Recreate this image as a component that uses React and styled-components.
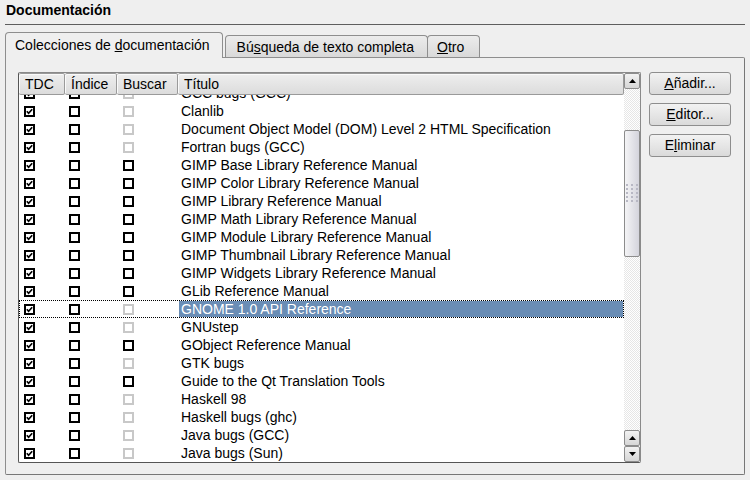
import React from 'react'
import styled, { createGlobalStyle, css } from 'styled-components'

const rows = [
  { title: 'GCC bugs (GCC)', search: 'off' },
  { title: 'Clanlib', search: 'off' },
  { title: 'Document Object Model (DOM) Level 2 HTML Specification', search: 'off' },
  { title: 'Fortran bugs (GCC)', search: 'off' },
  { title: 'GIMP Base Library Reference Manual', search: 'on' },
  { title: 'GIMP Color Library Reference Manual', search: 'on' },
  { title: 'GIMP Library Reference Manual', search: 'on' },
  { title: 'GIMP Math Library Reference Manual', search: 'on' },
  { title: 'GIMP Module Library Reference Manual', search: 'on' },
  { title: 'GIMP Thumbnail Library Reference Manual', search: 'on' },
  { title: 'GIMP Widgets Library Reference Manual', search: 'on' },
  { title: 'GLib Reference Manual', search: 'on' },
  { title: 'GNOME 1.0 API Reference', search: 'off', selected: true },
  { title: 'GNUstep', search: 'off' },
  { title: 'GObject Reference Manual', search: 'on' },
  { title: 'GTK bugs', search: 'off' },
  { title: 'Guide to the Qt Translation Tools', search: 'on' },
  { title: 'Haskell 98', search: 'off' },
  { title: 'Haskell bugs (ghc)', search: 'off' },
  { title: 'Java bugs (GCC)', search: 'off' },
  { title: 'Java bugs (Sun)', search: 'off' },
]

function Check({ checked, disabled }) {
  const color = disabled ? '#c8c8c8' : '#000'
  return (
    <svg width="11" height="11" viewBox="0 0 11 11">
      <rect x="1" y="1" width="9" height="9" fill="#fff" stroke={color} strokeWidth="2" />
      {checked && (
        <path d="M2.8 5.2 L4.6 7.2 L8.2 3.2" fill="none" stroke="#000" strokeWidth="1.7" />
      )}
    </svg>
  )
}

function Arrow({ down }) {
  return (
    <svg width="7" height="4" viewBox="0 0 7 4">
      <path d={down ? 'M0 0 H7 L3.5 4 Z' : 'M0 4 H7 L3.5 0 Z'} fill="#000" />
    </svg>
  )
}

function App() {
  return (
    <>
      <GlobalStyle />
      <Page>
        <Title>Documentación</Title>
        <Rule />
        <TabBar>
          <Tab active left={9} right={12}>
            Colecciones de <u>d</u>ocumentación
          </Tab>
          <Tab left={11} right={13}>
            Bú<u>s</u>queda de texto completa
          </Tab>
          <Tab joined left={9} right={15}>
            <u>O</u>tro
          </Tab>
        </TabBar>
        <Panel>
          <ListBox>
            <ListMain>
              <Header>
                <HeadCell>TDC</HeadCell>
                <HeadCell>Índice</HeadCell>
                <HeadCell>Buscar</HeadCell>
                <HeadCell>Título</HeadCell>
              </Header>
              <Body>
                <Scrolled>
                  {rows.map((r) => (
                    <Row key={r.title} selected={r.selected}>
                      <BoxCell pad={4}>
                        <Check checked />
                      </BoxCell>
                      <BoxCell pad={3}>
                        <Check />
                      </BoxCell>
                      <BoxCell pad={5}>
                        <Check disabled={r.search === 'off'} />
                      </BoxCell>
                      <TitleCell selected={r.selected}>{r.title}</TitleCell>
                    </Row>
                  ))}
                </Scrolled>
              </Body>
            </ListMain>
            <ScrollBar>
              <ScrollButton>
                <Arrow />
              </ScrollButton>
              <Thumb>
                <Grip>
                  {Array.from({ length: 15 }).map((_, i) => (
                    <span key={i} />
                  ))}
                </Grip>
              </Thumb>
              <Spacer />
              <ScrollButton>
                <Arrow />
              </ScrollButton>
              <ScrollButton>
                <Arrow down />
              </ScrollButton>
            </ScrollBar>
          </ListBox>
          <Buttons>
            <Button>
              <u>A</u>ñadir...
            </Button>
            <Button>
              <u>E</u>ditor...
            </Button>
            <Button>
              E<u>l</u>iminar
            </Button>
          </Buttons>
        </Panel>
      </Page>
    </>
  )
}

export default App

const GlobalStyle = createGlobalStyle`
  body {
    margin: 0;
    background: #efefef;
    font-family: "Liberation Sans", Arial, sans-serif;
    font-size: 14px;
    color: #000;
  }
  u {
    text-decoration: underline;
    text-underline-offset: 1px;
  }
`
const Page = styled.div`
  width: 750px;
  height: 480px;
  padding: 0 5px;
  box-sizing: border-box;
  overflow: hidden;
`
const Title = styled.div`
  font-weight: bold;
  padding: 2px 0 0 1px;
  line-height: 16px;
`
const Rule = styled.div`
  margin-top: 6px;
  border-top: 1px solid #5e5e5e;
`
const TabBar = styled.div`
  display: flex;
  align-items: flex-end;
  margin-top: 7px;
  height: 25px;
  position: relative;
  z-index: 1;
`
const Tab = styled.div`
  box-sizing: border-box;
  border: 1px solid #8e8e8e;
  border-bottom: none;
  border-radius: 4px 4px 0 0;
  padding: 0 ${(p) => p.right}px 0 ${(p) => p.left}px;
  line-height: 22px;
  height: 22px;
  background: linear-gradient(#ececec, #d9d9d9);
  margin-left: ${(p) => (p.joined ? '-1px' : '0')};
  ${(p) =>
    p.active &&
    css`
      height: 26px;
      line-height: 24px;
      margin-bottom: -1px;
      background: #efefef;
      margin-right: 2px;
    `}
`
const Panel = styled.div`
  box-sizing: border-box;
  height: 418px;
  border: 1px solid #8e8e8e;
  border-right-color: #777;
  border-bottom-color: #777;
  border-radius: 0 2px 2px 2px;
  padding: 14px 12px 11px 12px;
  display: flex;
  gap: 8px;
  align-items: flex-start;
`
const ListBox = styled.div`
  box-sizing: border-box;
  width: 623px;
  height: 391px;
  border: 1px solid #8a8a8a;
  border-left-color: #555;
  border-bottom-color: #555;
  border-radius: 2px;
  background: #fff;
  display: flex;
`
const ListMain = styled.div`
  flex: 1;
  display: flex;
  flex-direction: column;
  min-width: 0;
`
const columns = '46px 52px 61px 1fr'
const Header = styled.div`
  display: grid;
  grid-template-columns: ${columns};
  height: 22px;
  flex: none;
`
const HeadCell = styled.div`
  box-sizing: border-box;
  border: 1px solid #9a9a9a;
  border-left: none;
  border-radius: 2px;
  background: linear-gradient(#eeeeee, #dcdcdc);
  padding-left: 6px;
  line-height: 20px;
  box-shadow: inset 1px 1px 0 #fafafa;
`
const Body = styled.div`
  flex: 1;
  overflow: hidden;
`
const Scrolled = styled.div`
  margin-top: -11px;
`
const Row = styled.div`
  display: grid;
  grid-template-columns: ${columns};
  height: 18px;
  box-sizing: border-box;
  border: 1px dotted transparent;
  ${(p) =>
    p.selected &&
    css`
      border-color: #000;
    `}
`
const BoxCell = styled.div`
  display: flex;
  align-items: center;
  padding-left: ${(p) => p.pad}px;
`
const TitleCell = styled.div`
  padding-left: 2px;
  line-height: 16px;
  white-space: nowrap;
  ${(p) =>
    p.selected &&
    css`
      background: #6a8db5;
      color: #fff;
    `}
`
const ScrollBar = styled.div`
  width: 16px;
  flex: none;
  display: flex;
  flex-direction: column;
  background-color: #fff;
  background-image: repeating-conic-gradient(#e6e6e6 0 25%, #fff 0 50%);
  background-size: 2px 2px;
`
const ScrollButton = styled.div`
  box-sizing: border-box;
  height: 16px;
  border: 1px solid #8c8c8c;
  border-radius: 2px;
  background: linear-gradient(#f2f2f2, #d6d6d6);
  display: flex;
  align-items: center;
  justify-content: center;
  flex: none;
`
const Thumb = styled.div`
  box-sizing: border-box;
  margin-top: 41px;
  height: 127px;
  border: 1px solid #8c8c8c;
  border-radius: 2px;
  background: linear-gradient(90deg, #f4f4f6, #d4d4dc);
  display: flex;
  justify-content: center;
  padding-top: 53px;
  flex: none;
`
const Grip = styled.div`
  display: grid;
  grid-template-columns: repeat(3, 2px);
  grid-auto-rows: 2px;
  gap: 2px 3px;
  span {
    background: #b8b8c4;
  }
`
const Spacer = styled.div`
  flex: 1;
`
const Buttons = styled.div`
  display: flex;
  flex-direction: column;
  gap: 8px;
`
const Button = styled.div`
  box-sizing: border-box;
  width: 82px;
  height: 23px;
  border: 1px solid #8e8e8e;
  border-radius: 3px;
  background: linear-gradient(#f2f2f2, #dadada);
  text-align: center;
  line-height: 21px;
`
